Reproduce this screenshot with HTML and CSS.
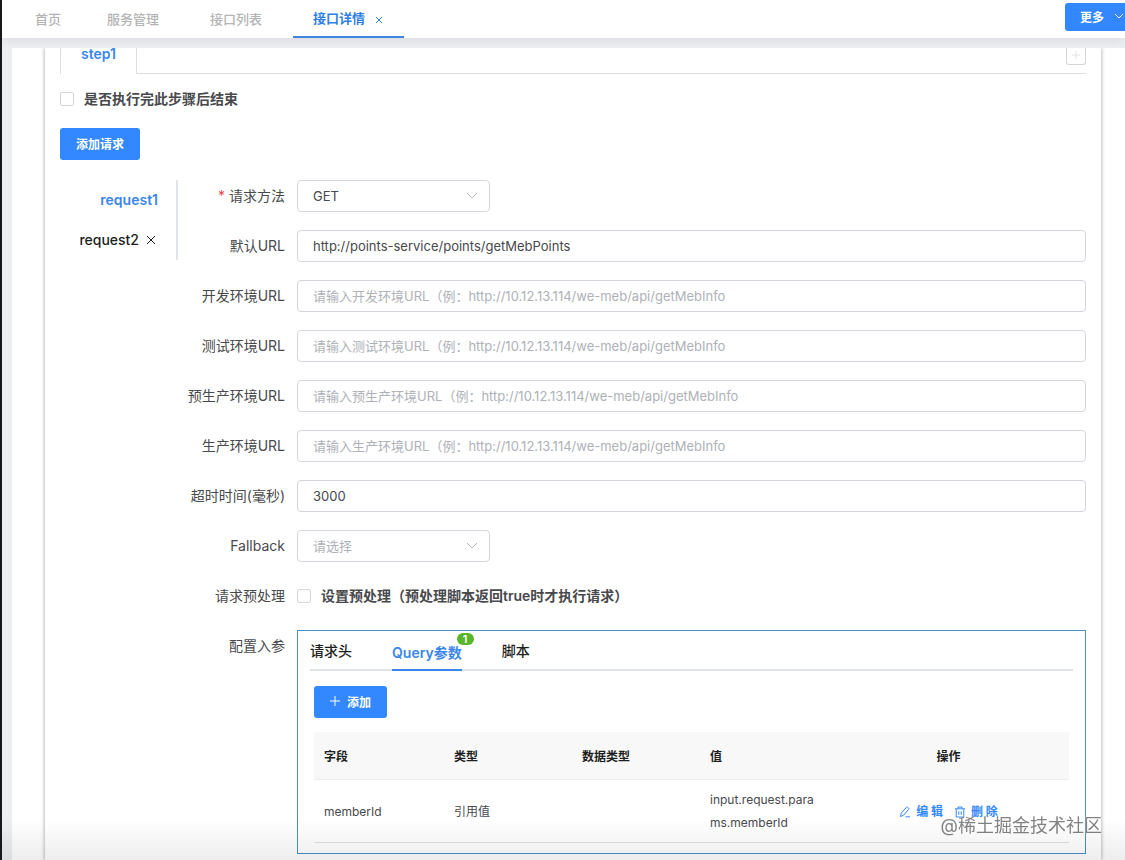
FILE: index.html
```html
<!DOCTYPE html>
<html lang="zh-CN">
<head>
  <meta charset="UTF-8" />
  <meta name="viewport" content="width=device-width, initial-scale=1.0" />
  <title>接口详情</title>
  <link rel="stylesheet" href="styles.css">
</head>
<body>
  <header class="topbar">
    <nav class="page-tabs">
      <a class="home" href="#">首页</a>
      <a href="#">服务管理</a>
      <a href="#">接口列表</a>
      <div class="active">
        <a href="#">接口详情</a>
        <button class="close" aria-label="关闭">
          <svg width="8" height="8" viewBox="0 0 8 8"><path d="M1 1l6 6M7 1L1 7" /></svg>
        </button>
      </div>
    </nav>
    <button class="btn more">更多
      <svg width="10" height="6" viewBox="0 0 10 6"><path d="M1 1l4 4 4-4" /></svg>
    </button>
  </header>

  <main class="content">
    <div class="card">
      <div class="step-tabs">
        <a class="step" href="#">step1</a>
        <button class="add-step" aria-label="添加步骤">
          <svg width="8" height="8" viewBox="0 0 8 8"><path d="M0 4h8M4 0v8" /></svg>
        </button>
      </div>

      <label class="check end-check"><input type="checkbox" />是否执行完此步骤后结束</label>
      <button class="btn">添加请求</button>

      <div class="request">
        <ul class="request-list">
          <li><a class="active" href="#">request1</a></li>
          <li>
            <a href="#">request2</a>
            <button class="close" aria-label="删除 request2">
              <svg width="10" height="10" viewBox="0 0 10 10"><path d="M1 1l8 8M9 1L1 9" /></svg>
            </button>
          </li>
        </ul>

        <form class="form">
          <label class="name required" for="method">请求方法</label>
          <div class="select">
            <select id="method"><option>GET</option><option>POST</option></select>
            <svg width="12" height="8" viewBox="0 0 12 8"><path d="M1 1l5 5 5-5" /></svg>
          </div>

          <label class="name" for="defaultUrl">默认URL</label>
          <input type="text" id="defaultUrl" value="http://points-service/points/getMebPoints" />

          <label class="name" for="devUrl">开发环境URL</label>
          <input type="text" id="devUrl" placeholder="请输入开发环境URL（例：http://10.12.13.114/we-meb/api/getMebInfo" />

          <label class="name" for="testUrl">测试环境URL</label>
          <input type="text" id="testUrl" placeholder="请输入测试环境URL（例：http://10.12.13.114/we-meb/api/getMebInfo" />

          <label class="name" for="preUrl">预生产环境URL</label>
          <input type="text" id="preUrl" placeholder="请输入预生产环境URL（例：http://10.12.13.114/we-meb/api/getMebInfo" />

          <label class="name" for="prodUrl">生产环境URL</label>
          <input type="text" id="prodUrl" placeholder="请输入生产环境URL（例：http://10.12.13.114/we-meb/api/getMebInfo" />

          <label class="name" for="timeout">超时时间(毫秒)</label>
          <input type="text" id="timeout" value="3000" />

          <label class="name" for="fallback">Fallback</label>
          <div class="select">
            <select id="fallback" class="empty"><option>请选择</option></select>
            <svg width="12" height="8" viewBox="0 0 12 8"><path d="M1 1l5 5 5-5" /></svg>
          </div>

          <span class="name">请求预处理</span>
          <label class="check"><input type="checkbox" />设置预处理（预处理脚本返回true时才执行请求）</label>

          <span class="name">配置入参</span>
          <div class="params">
            <div class="param-tabs">
              <a href="#">请求头</a>
              <a class="active" href="#">Query参数<span class="badge">1</span></a>
              <a href="#">脚本</a>
            </div>
            <div class="param-body">
              <button type="button" class="btn">
                <svg width="10" height="10" viewBox="0 0 10 10"><path d="M0 5h10M5 0v10" /></svg>添加
              </button>
              <table>
                <colgroup>
                  <col class="col-field" /><col class="col-type" /><col class="col-type" /><col class="col-type" /><col />
                </colgroup>
                <thead>
                  <tr><th>字段</th><th>类型</th><th>数据类型</th><th>值</th><th class="ops">操作</th></tr>
                </thead>
                <tbody>
                  <tr>
                    <td>memberId</td>
                    <td>引用值</td>
                    <td></td>
                    <td>input.request.params.memberId</td>
                    <td class="ops">
                      <a href="#">
                        <svg width="12" height="12" viewBox="0 0 12 12"><path d="M1.5 10.5l.7-3.3L7.4 1.3a1 1 0 0 1 1.4 0l.8.7a1 1 0 0 1 0 1.4L4.6 9.2zM6.5 10.8H11" /></svg>编 辑</a>
                      <a href="#">
                        <svg width="12" height="12" viewBox="0 0 12 12"><path d="M1 2.8h10M4 2.5V1h4v1.5M2.2 3v8h7.6V3M4.8 5.2v3.6M7.2 5.2v3.6" /></svg>删 除</a>
                    </td>
                  </tr>
                </tbody>
              </table>
            </div>
          </div>
        </form>
      </div>
    </div>
  </main>
  <div class="watermark">@稀土掘金技术社区</div>
</body>
</html>
```
FILE: styles.css
```css
* { box-sizing: border-box; }
body {
  margin: 0; min-height: 100vh; display: flex; flex-direction: column;
  border-left: 2px solid #17181c; background: #eceef2; color: #48494c;
  font-family: Inter, "Noto Sans CJK SC", sans-serif; font-size: 14px; line-height: 20px;
}
a { color: inherit; text-decoration: none; }
button, input, select { font-family: inherit; }
svg { fill: none; stroke: currentColor; stroke-width: 1; flex: none; }

.topbar {
  position: relative; z-index: 1; display: flex; justify-content: space-between; height: 38px;
  background: #fff; box-shadow: 0 1px 12px rgba(0,21,41,0.1);
}
.page-tabs { display: flex; gap: 11px; padding-left: 13px; font-size: 13px; font-weight: 500; line-height: 38px; color: #b4b4b4; }
.page-tabs > * { padding: 0 20px; }
.page-tabs .home { padding-right: 15px; }
.page-tabs .active {
  display: flex; align-items: center; gap: 10px;
  color: #2f7fe6; font-weight: 600; border-bottom: 2px solid #3d85e0;
}
.close { display: flex; padding: 0; border: none; background: none; color: inherit; cursor: pointer; }
.page-tabs .close { padding: 4px 1px 0 0; }

.btn {
  display: inline-flex; align-items: center; gap: 7px; height: 32px; padding: 0 16px 2px;
  border: none; border-radius: 3px; background: #3388ff; color: #fff;
  font-size: 12px; font-weight: 700; cursor: pointer;
}
.btn.more { width: 60px; height: 28px; margin-top: 3px; padding: 0 0 2px 15px; gap: 10px; border-radius: 3px 0 0 3px; white-space: nowrap; }

.content { flex: 1; display: flex; margin: 10px 0 0 10px; padding: 0 24px 0 33px; background: #fff; }
.card { flex: 1; min-width: 0; padding: 0 15px 6px; box-shadow: 0 0 4px rgba(0,0,0,0.4); clip-path: inset(0 -8px); }

.step-tabs { display: flex; justify-content: space-between; height: 26px; border-bottom: 1px solid #dcdfe6; }
.step {
  height: 26px; padding: 0 20px; line-height: 12px; background: #fff; color: #3a86ec; font-weight: 600;
  border: 1px solid #dcdfe6; border-width: 0 1px;
}
.add-step {
  display: flex; align-items: center; justify-content: center; width: 20px; height: 17px; padding: 0 0 3px;
  border: 1px solid #d3d6dc; border-top: none; border-radius: 0 0 3px 3px; background: #fff; color: #dfe2e6;
}

.check { display: flex; align-items: center; gap: 10px; font-weight: 600; }
.check input {
  appearance: none; width: 14px; height: 14px; margin: 0;
  border: 1px solid #d3d6dc; border-radius: 2px; background: #fff;
}
.end-check { margin: 15px 0 19px; }

.request { display: flex; align-items: flex-start; margin-top: 20px; }
.request-list {
  width: 118px; margin: 0; padding: 0 18px 0 0; list-style: none;
  border-right: 2px solid #e0e3e8; color: #1d1e20; font-weight: 500;
}
.request-list li { display: flex; align-items: center; justify-content: flex-end; gap: 7px; height: 40px; }
.request-list .close { padding-right: 2px; }
.request-list .active { color: #3a86ec; font-weight: 600; }

.form { flex: 1; min-width: 0; display: grid; grid-template-columns: 107px minmax(0, 1fr); gap: 18px 12px; }
.name { text-align: right; line-height: 32px; white-space: nowrap; }
.required::before { content: "*"; margin-right: 4px; color: #e8484a; }
.form input[type="text"], .form select {
  width: 100%; height: 32px; padding: 0 15px; border: 1px solid #d3d6dc; border-radius: 4px;
  background: #fff; color: #48494c; font-size: 13px;
}
.form input::placeholder { color: #aeb1b7; opacity: 1; }
.select { position: relative; width: 193px; height: 32px; }
.select select { appearance: none; }
.form .select .empty { color: #aeb1b7; }
.select svg { position: absolute; right: 12px; top: 12px; color: #b8bcc4; pointer-events: none; }

.params { padding: 0 12px 10px; border: 1px solid #4a8fca; }
.param-tabs {
  display: flex; gap: 40px; height: 40px; border-bottom: 2px solid #e0e3e8;
  color: #1d1e20; font-weight: 500; line-height: 40px;
}
.param-tabs .active { position: relative; height: 40px; line-height: 44px; color: #3a86ec; font-weight: 600; border-bottom: 2px solid #3a86ec; }
.badge {
  position: absolute; top: 2px; right: -12px; width: 17px; height: 12px; border-radius: 6px;
  background: #5ab52c; color: #fff; font-size: 11px; line-height: 12px; text-align: center;
}
.param-body { padding: 15px 4px 0; }

table { width: 100%; margin-top: 14px; table-layout: fixed; border-spacing: 0; font-size: 12px; line-height: 23px; }
.col-field { width: 130px; }
.col-type { width: 128px; }
th { height: 48px; padding: 2px 10px 0; background: #f8f8f9; color: #1d1e20; text-align: left; border-bottom: 1px solid #ebeef0; }
td { height: 63px; padding: 8px 10px; word-break: break-all; border-bottom: 1px solid #e0e0e4; }
.ops { text-align: center; }
td.ops { color: #3388ff; font-weight: 700; }
td.ops a { margin: 0 4px; }
td.ops svg { margin-right: 5px; vertical-align: -2px; }

.watermark {
  position: fixed; right: 23px; bottom: 24px; color: rgba(90,90,90,0.75);
  font-size: 18px; text-shadow: 0 0 2px #fff;
}
/* soft fade along the lower edge of the window */
body::after {
  content: ""; position: fixed; left: 2px; right: 0; bottom: 0; height: 40px;
  background: linear-gradient(rgba(0,0,0,0), rgba(0,0,0,0.07)); pointer-events: none;
}
```
